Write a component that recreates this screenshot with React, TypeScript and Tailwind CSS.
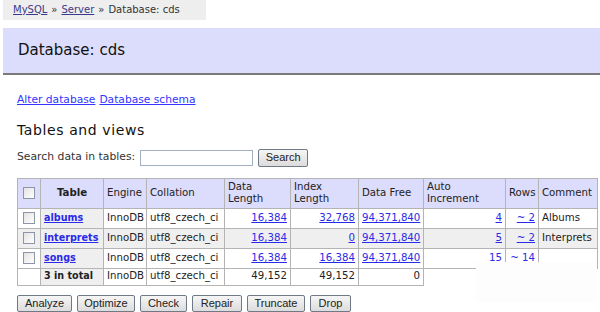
import React from "react";

type Row = {
  name: string;
  dataLen: string;
  indexLen: string;
  comment: string;
  autoInc: string;
  rows: string;
  odd?: boolean;
};

const tables: Row[] = [
  { name: "albums", dataLen: "16,384", indexLen: "32,768", autoInc: "4", rows: "~ 2", comment: "Albums" },
  { name: "interprets", dataLen: "16,384", indexLen: "0", autoInc: "5", rows: "~ 2", comment: "Interprets", odd: true },
  { name: "songs", dataLen: "16,384", indexLen: "16,384", autoInc: "15", rows: "~ 14", comment: "" },
];

const linkCls = "text-[#2a2ae8] underline";
const cell = "border border-[#b4b4b4] px-[3px] py-0 align-middle";
const btnCls =
  "h-[17px] rounded-[2px] border border-[#6f7a86] bg-gradient-to-b from-[#f6f6f6] to-[#dcdcdc] px-[6px] text-[11px] leading-none text-[#222] font-['Liberation_Sans',Arial,sans-serif]";

function Check() {
  return (
    <span className="mx-auto block h-[12px] w-[12px] border border-[#8c96a4] bg-gradient-to-br from-[#e2e2e2] to-white" />
  );
}

export default function App() {
  return (
    <div className="relative h-[312px] w-[600px] overflow-hidden bg-white font-['DejaVu_Sans',Verdana,sans-serif] text-[10.8px] leading-[12.5px] text-[#222]">
      {/* breadcrumb */}
      <div className="ml-[3px] flex h-[20px] w-[203px] items-center bg-[#eeeeee] pl-[10px] text-[10px] text-[#333]">
        <a className="text-[#3a3a8c] underline">MySQL</a>
        <span className="mx-[4px]">»</span>
        <a className="text-[#3a3a8c] underline">Server</a>
        <span className="mx-[4px]">»</span>
        <span>Database: cds</span>
      </div>

      {/* heading */}
      <div className="mt-[8px] ml-[3px] flex h-[47px] items-center border-b-2 border-[#7a7a7a] bg-[#dcdcfc] pl-[15px]">
        <h2 className="text-[15px] font-normal text-[#111]">Database: cds</h2>
      </div>

      <div className="pl-[17px]">
        <div className="mt-[19px] flex gap-[4px] text-[10.7px]">
          <a className="text-[#3333ff] underline">Alter database</a>
          <a className="text-[#3333ff] underline">Database schema</a>
        </div>

        <h3 className="mt-[15px] text-[14px] leading-[17px] font-normal tracking-[0.6px] text-[#111]">
          Tables and views
        </h3>

        <div className="mt-[10px] flex h-[18px] items-center">
          <span className="text-[#333]">Search data in tables:</span>
          <span className="ml-[5px] h-[16px] w-[113px] border border-[#a3b0c2] bg-white" />
          <button className={`ml-[5px] h-[18px] w-[50px] ${btnCls} px-0 text-[11.5px]`}>Search</button>
        </div>

        <table className="mt-[11px] w-[580px] table-fixed border-collapse text-[10.2px]">
          <colgroup>
            <col className="w-[23px]" />
            <col className="w-[63px]" />
            <col className="w-[43px]" />
            <col className="w-[78px]" />
            <col className="w-[66px]" />
            <col className="w-[68px]" />
            <col className="w-[65px]" />
            <col className="w-[82px]" />
            <col className="w-[33px]" />
            <col className="w-[59px]" />
          </colgroup>
          <thead>
            <tr className="h-[30px] bg-[#dcdcfc]">
              <td className={cell}>
                <Check />
              </td>
              <th className={`${cell} text-center font-bold`}>Table</th>
              <td className={cell}>Engine</td>
              <td className={cell}>Collation</td>
              <td className={cell}>Data Length</td>
              <td className={cell}>Index Length</td>
              <td className={cell}>Data Free</td>
              <td className={cell}>Auto Increment</td>
              <td className={`${cell} text-right`}>Rows</td>
              <td className={cell}>Comment</td>
            </tr>
          </thead>
          <tbody>
            {tables.map((t) => (
              <tr key={t.name} className={`h-[20px] ${t.odd ? "bg-[#efefef]" : "bg-white"}`}>
                <td className={cell}>
                  <Check />
                </td>
                <th className={`${cell} bg-[#efefef] pr-0 text-left text-[9.6px] font-bold whitespace-nowrap`}>
                  <a className={linkCls}>{t.name}</a>
                </th>
                <td className={cell}>InnoDB</td>
                <td className={`${cell} whitespace-nowrap`}>utf8_czech_ci</td>
                <td className={`${cell} text-right`}>
                  <a className={linkCls}>{t.dataLen}</a>
                </td>
                <td className={`${cell} text-right`}>
                  <a className={linkCls}>{t.indexLen}</a>
                </td>
                <td className={`${cell} text-right whitespace-nowrap`}>
                  <a className={linkCls}>94,371,840</a>
                </td>
                <td className={`${cell} text-right`}>
                  <a className={linkCls}>{t.autoInc}</a>
                </td>
                <td className={`${cell} text-right whitespace-nowrap`}>
                  <a className={linkCls}>{t.rows}</a>
                </td>
                <td className={`${cell} whitespace-nowrap`}>{t.comment}</td>
              </tr>
            ))}
            <tr className="h-[17px]">
              <td className={cell}></td>
              <th className={`${cell} bg-[#efefef] text-left text-[9.6px] font-bold whitespace-nowrap`}>3 in total</th>
              <td className={cell}>InnoDB</td>
              <td className={`${cell} whitespace-nowrap`}>utf8_czech_ci</td>
              <td className={`${cell} text-right`}>49,152</td>
              <td className={`${cell} text-right`}>49,152</td>
              <td className={`${cell} text-right`}>0</td>
            </tr>
          </tbody>
        </table>

        <div className="mt-[9px] flex gap-[5px]">
          <button className={`w-[55px] ${btnCls}`}>Analyze</button>
          <button className={`w-[58px] ${btnCls}`}>Optimize</button>
          <button className={`w-[47px] ${btnCls}`}>Check</button>
          <button className={`w-[50px] ${btnCls}`}>Repair</button>
          <button className={`w-[58px] ${btnCls}`}>Truncate</button>
          <button className={`w-[41px] ${btnCls}`}>Drop</button>
        </div>
      </div>

      {/* washed-out patch over the lower right corner of the table */}
      <div className="absolute top-[262px] left-[476px] h-[40px] w-[121px] bg-[#fdfdfd]" />
    </div>
  );
}
